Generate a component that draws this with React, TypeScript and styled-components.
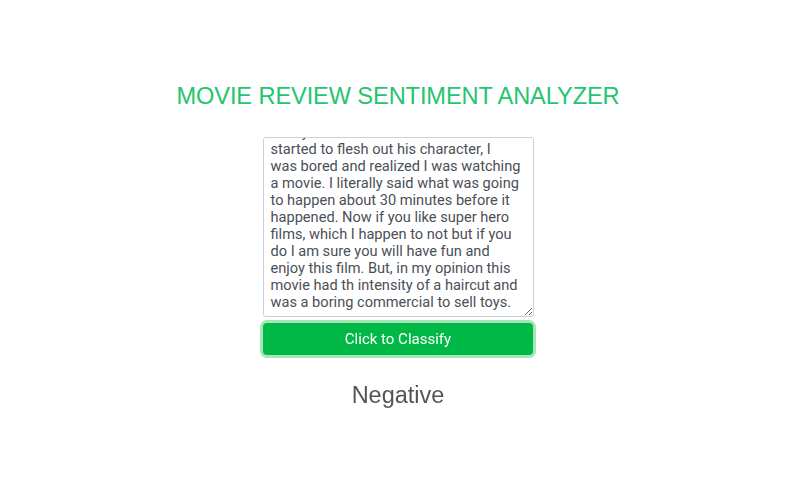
import React, { useEffect, useRef } from "react";
import styled, { createGlobalStyle } from "styled-components";

const Global = createGlobalStyle`
  html, body { margin: 0; padding: 0; background: #fff; }
  body { font-family: "Liberation Sans", Arial, sans-serif; }
`;

const Page = styled.main`
  display: flex;
  flex-direction: column;
  align-items: center;
  padding-top: 81px;
`;

const Title = styled.h1`
  margin: 0 0 26px;
  font-family: "Liberation Sans", Arial, sans-serif;
  font-weight: 400;
  font-size: 23.6px;
  line-height: 30px;
  color: #25c46f;
  letter-spacing: -0.1px;
`;

const Form = styled.form`
  display: flex;
  flex-direction: column;
  align-items: center;
  gap: 6px;
  width: 271px;
`;

const Review = styled.textarea`
  box-sizing: border-box;
  width: 271px;
  height: 180px;
  padding: 6px 7px 5px;
  border: 1px solid #cdd1d6;
  border-radius: 3px;
  font-family: Roboto, "Noto Sans", sans-serif;
  font-size: 14.6px;
  line-height: 17px;
  color: #4a5058;
  resize: vertical;
  overflow-y: auto;
  scrollbar-width: none;
  outline: none;
  white-space: pre-wrap;
  &::-webkit-scrollbar { display: none; }
`;

const Classify = styled.button`
  box-sizing: border-box;
  width: 270px;
  height: 32px;
  border: none;
  border-radius: 4px;
  background: #00b845;
  color: #fff;
  font-family: Roboto, "Noto Sans", sans-serif;
  font-size: 15px;
  box-shadow: 0 0 0 3px #a6e7b9;
  cursor: pointer;
`;

const Result = styled.h2`
  margin: 25px 0 0;
  font-family: "Liberation Sans", Arial, sans-serif;
  font-weight: 400;
  font-size: 23.5px;
  line-height: 30px;
  color: #555;
`;

const review =
  "I went in with high hopes but the whole thing felt\ngeneric, and by the time the story finally\nstarted to flesh out his character, I\nwas bored and realized I was watching\na movie. I literally said what was going\nto happen about 30 minutes before it\nhappened. Now if you like super hero\nfilms, which I happen to not but if you\ndo I am sure you will have fun and\nenjoy this film. But, in my opinion this\nmovie had th intensity of a haircut and\nwas a boring commercial to sell toys.";

export default function App() {
  const ref = useRef<HTMLTextAreaElement>(null);
  useEffect(() => {
    if (ref.current) ref.current.scrollTop = ref.current.scrollHeight;
  }, []);
  return (
    <>
      <Global />
      <Page>
        <Title>MOVIE REVIEW SENTIMENT ANALYZER</Title>
        <Form onSubmit={(e) => e.preventDefault()}>
          <Review ref={ref} defaultValue={review} />
          <Classify type="submit">Click to Classify</Classify>
        </Form>
        <Result>Negative</Result>
      </Page>
    </>
  );
}
